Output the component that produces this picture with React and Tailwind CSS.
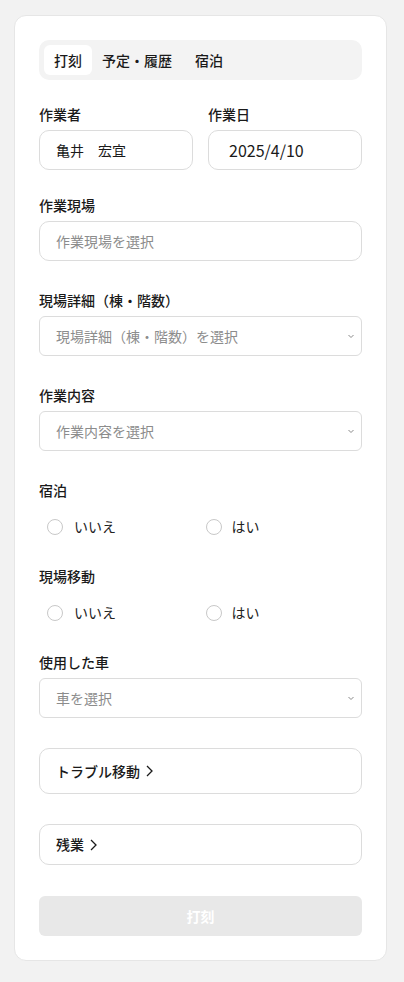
import React from 'react';

const font = { fontFamily: '"Noto Sans CJK JP", "Noto Sans", sans-serif' };

function Chevron() {
    return (
        <svg width="8" height="6" viewBox="0 0 8 6" className="absolute right-[6px] top-1/2 -translate-y-1/2">
            <path d="M1.5 2 L4 4.5 L6.5 2" fill="none" stroke="#8a8a8a" strokeWidth="1" />
        </svg>
    );
}

function SelectBox({ placeholder }) {
    return (
        <div className="relative h-10 border border-[#dcdcdc] rounded-[6px] flex items-center px-4 text-[14px] text-[#8c8c8c]">
            {placeholder}
            <Chevron />
        </div>
    );
}

function Label({ children }) {
    return <div className="text-[14px] leading-5 font-medium text-[#1a1a1a] mb-[6px]">{children}</div>;
}

function RadioRow() {
    return (
        <div className="grid grid-cols-2 h-5 items-center text-[14px] text-[#222]">
            <label className="flex items-center pl-2">
                <span className="w-4 h-4 rounded-full border border-[#c8c8c8] bg-white" />
                <span className="ml-[11px]">いいえ</span>
            </label>
            <label className="flex items-center pl-[5px]">
                <span className="w-4 h-4 rounded-full border border-[#c8c8c8] bg-white" />
                <span className="ml-[10px]">はい</span>
            </label>
        </div>
    );
}

function ArrowRight() {
    return (
        <svg width="9" height="14" viewBox="0 0 9 14" className="ml-[5px]">
            <path d="M2 2 L7 7 L2 12" fill="none" stroke="#1a1a1a" strokeWidth="1.3" />
        </svg>
    );
}

export default function App() {
    return (
        <div className="min-h-[982px] bg-[#f2f2f2] pt-[15px] pb-[22px]" style={font}>
            <div className="ml-[14px] mr-[17px] bg-white border border-[#e6e6e6] rounded-[12px] p-6">
                <div className="h-10 bg-[#f3f3f3] rounded-[10px] p-[5px] flex text-[14px] font-medium text-[#1a1a1a]">
                    <div className="h-[30px] px-[10px] bg-white rounded-md flex items-center">打刻</div>
                    <div className="h-[30px] pl-[10px] pr-[13px] flex items-center">予定・履歴</div>
                    <div className="h-[30px] px-[10px] flex items-center">宿泊</div>
                </div>

                <div className="grid grid-cols-2 gap-[15px] mt-[24px]">
                    <div>
                        <Label>作業者</Label>
                        <div className="h-10 border border-[#dcdcdc] rounded-[10px] flex items-center px-4 text-[14px] text-[#1a1a1a]">
                            亀井　宏宜
                        </div>
                    </div>
                    <div>
                        <Label>作業日</Label>
                        <div className="h-10 border border-[#dcdcdc] rounded-[10px] flex items-center pl-5 text-[16px] text-[#1a1a1a]">
                            2025/4/10
                        </div>
                    </div>
                </div>

                <div className="mt-[25px]">
                    <Label>作業現場</Label>
                    <div className="h-10 border border-[#dcdcdc] rounded-[10px] flex items-center px-4 text-[14px] text-[#8c8c8c]">
                        作業現場を選択
                    </div>
                </div>

                <div className="mt-[29px]">
                    <Label>現場詳細（棟・階数）</Label>
                    <SelectBox placeholder="現場詳細（棟・階数）を選択" />
                </div>

                <div className="mt-[29px]">
                    <Label>作業内容</Label>
                    <SelectBox placeholder="作業内容を選択" />
                </div>

                <div className="mt-[29px]">
                    <div className="text-[14px] leading-5 font-medium text-[#1a1a1a] mb-4">宿泊</div>
                    <RadioRow />
                </div>

                <div className="mt-[30px]">
                    <div className="text-[14px] leading-5 font-medium text-[#1a1a1a] mb-4">現場移動</div>
                    <RadioRow />
                </div>

                <div className="mt-[30px]">
                    <Label>使用した車</Label>
                    <SelectBox placeholder="車を選択" />
                </div>

                <button className="mt-[30px] w-full h-[46px] border border-[#dcdcdc] rounded-[10px] flex items-center px-4 text-[14px] font-medium text-[#1a1a1a]">
                    トラブル移動<ArrowRight />
                </button>

                <button className="mt-[30px] w-full h-[41px] border border-[#dcdcdc] rounded-[10px] flex items-center px-4 text-[14px] font-medium text-[#1a1a1a]">
                    残業<ArrowRight />
                </button>

                <button className="mt-[31px] w-full h-10 bg-[#e8e8e8] rounded-md text-[14px] font-bold text-white">
                    打刻
                </button>
            </div>
        </div>
    );
}
